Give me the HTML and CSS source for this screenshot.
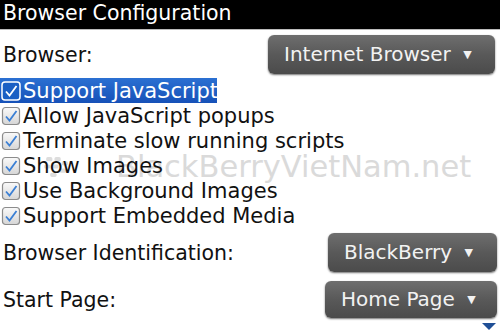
FILE: index.html
```html
<!DOCTYPE html>
<html>
<head>
    <title>Browser Configuration</title>
    <link rel="stylesheet" href="styles.css">
</head>
<body>
    <div class="titlebar">Browser Configuration</div>

    <div class="field field-first">
        <span class="label">Browser:</span>
        <button class="choice choice-wide">Internet Browser <span class="arrow">&#9660;</span></button>
    </div>

    <div class="options">
        <div class="option selected">
            <svg class="box" viewBox="0 0 20 20"><rect x="1" y="1" width="18" height="18" rx="3" fill="#1a5fc4" stroke="#fff" stroke-width="1.5"/><path d="M5 10.5 L8.5 14.5 L15.5 5" fill="none" stroke="#fff" stroke-width="1.8"/></svg>
            <span>Support JavaScript</span>
        </div>
        <div class="option">
            <svg class="box" viewBox="0 0 20 20"><rect x="1.5" y="1.5" width="17" height="17" rx="3" fill="url(#boxfill)" stroke="#8c8c8c" stroke-width="1.2"/><path d="M5 10.5 L8.5 14.5 L15.5 5" fill="none" stroke="#3b7fd4" stroke-width="1.8"/></svg>
            <span>Allow JavaScript popups</span>
        </div>
        <div class="option">
            <svg class="box" viewBox="0 0 20 20"><rect x="1.5" y="1.5" width="17" height="17" rx="3" fill="url(#boxfill)" stroke="#8c8c8c" stroke-width="1.2"/><path d="M5 10.5 L8.5 14.5 L15.5 5" fill="none" stroke="#3b7fd4" stroke-width="1.8"/></svg>
            <span>Terminate slow running scripts</span>
        </div>
        <div class="option">
            <svg class="box" viewBox="0 0 20 20"><rect x="1.5" y="1.5" width="17" height="17" rx="3" fill="url(#boxfill)" stroke="#8c8c8c" stroke-width="1.2"/><path d="M5 10.5 L8.5 14.5 L15.5 5" fill="none" stroke="#3b7fd4" stroke-width="1.8"/></svg>
            <span>Show Images</span>
        </div>
        <div class="option">
            <svg class="box" viewBox="0 0 20 20"><rect x="1.5" y="1.5" width="17" height="17" rx="3" fill="url(#boxfill)" stroke="#8c8c8c" stroke-width="1.2"/><path d="M5 10.5 L8.5 14.5 L15.5 5" fill="none" stroke="#3b7fd4" stroke-width="1.8"/></svg>
            <span>Use Background Images</span>
        </div>
        <div class="option">
            <svg class="box" viewBox="0 0 20 20"><rect x="1.5" y="1.5" width="17" height="17" rx="3" fill="url(#boxfill)" stroke="#8c8c8c" stroke-width="1.2"/><path d="M5 10.5 L8.5 14.5 L15.5 5" fill="none" stroke="#3b7fd4" stroke-width="1.8"/></svg>
            <span>Support Embedded Media</span>
        </div>
    </div>

    <div class="field field-id">
        <span class="label">Browser Identification:</span>
        <button class="choice choice-mid">BlackBerry <span class="arrow">&#9660;</span></button>
    </div>
    <div class="field">
        <span class="label">Start Page:</span>
        <button class="choice choice-home">Home Page <span class="arrow">&#9660;</span></button>
    </div>

    <div class="watermark">
        <svg class="logo" viewBox="0 0 24 22"><g fill="#c8c8c8"><rect x="3" y="1" width="6" height="4" rx="1.5"/><rect x="11" y="1" width="6" height="4" rx="1.5"/><rect x="1" y="8" width="6" height="4" rx="1.5"/><rect x="9" y="8" width="6" height="4" rx="1.5"/><rect x="18" y="5" width="6" height="4" rx="1.5"/><rect x="7" y="16" width="6" height="4" rx="1.5"/><rect x="16" y="12" width="6" height="4" rx="1.5"/></g></svg>
        <span class="mark-text">BlackBerryVietNam.net</span>
    </div>

    <svg class="more" viewBox="0 0 14 7"><path d="M0 0 H14 L7 7 Z" fill="#1f4f96"/></svg>

    <svg class="defs" width="0" height="0"><defs><linearGradient id="boxfill" x1="0" y1="0" x2="0" y2="1"><stop offset="0" stop-color="#fafafa"/><stop offset="1" stop-color="#d6d6d6"/></linearGradient></defs></svg>
</body>
</html>
```

FILE: styles.css
```css
body {
    margin: 0;
    width: 500px;
    height: 333px;
    overflow: hidden;
    position: relative;
    background: #fff;
    font-family: "DejaVu Sans", sans-serif;
    color: #111;
}
.titlebar {
    height: 29px;
    line-height: 27px;
    padding-left: 3px;
    background: #000;
    color: #fff;
    font-size: 20.5px;
    border-bottom: 1px solid #bbb;
}
.field {
    display: flex;
    justify-content: space-between;
    align-items: center;
    padding: 0 3px;
    height: 46px;
    font-size: 20.5px;
}
.field-first {
    margin-top: 1px;
}
.field-id {
    height: 48px;
}
.label {
    position: relative;
    z-index: 1;
    padding-top: 2px;
}
.choice {
    font-family: "DejaVu Sans", sans-serif;
    font-size: 20px;
    color: #f2f2f2;
    background: linear-gradient(#6e6e6e, #595959 50%, #4b4b4b);
    border: none;
    border-radius: 6px;
    box-shadow: 0 1px 2px rgba(0, 0, 0, 0.55);
    height: 39px;
    padding: 0 14px 0 16px;
    text-align: left;
    white-space: nowrap;
}
.choice-wide {
    width: 227px;
    margin-right: 2px;
}
.choice-mid {
    width: 169px;
}
.choice-home {
    width: 172px;
    height: 37px;
}
.arrow {
    font-size: 11px;
    margin-left: 6px;
    vertical-align: 3px;
}
.options {
    margin-top: 1px;
}
.option {
    position: relative;
    z-index: 1;
    display: flex;
    align-items: center;
    height: 25px;
    font-size: 21px;
    padding-left: 1px;
    padding-top: 1px;
    box-sizing: border-box;
    white-space: nowrap;
}
.option span {
    padding-left: 2px;
    padding-right: 2px;
}
.option.selected {
    width: 217px;
    background: linear-gradient(#2b70d2, #1651b8);
    color: #fff;
}
.box {
    width: 20px;
    height: 20px;
    flex-shrink: 0;
}
.watermark {
    position: absolute;
    left: 43px;
    top: 152px;
    display: flex;
    align-items: center;
    gap: 48px;
    pointer-events: none;
}
.logo {
    width: 25px;
    height: 23px;
    opacity: 0.6;
}
.mark-text {
    font-size: 30.5px;
    line-height: 1;
    color: #dadada;
}
.more {
    position: absolute;
    right: 4px;
    bottom: 3px;
    width: 14px;
    height: 7px;
}
.defs {
    position: absolute;
}
```
